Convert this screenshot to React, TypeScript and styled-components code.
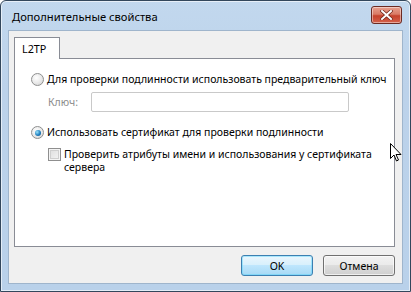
import styled, { createGlobalStyle } from 'styled-components'

const GlobalStyle = createGlobalStyle`
  html, body {
    margin: 0;
    padding: 0;
    background: #ffffff;
  }
  body {
    font-family: 'Noto Sans', 'DejaVu Sans', sans-serif;
  }
`

const Window = styled.div`
  box-sizing: border-box;
  width: 411px;
  height: 292px;
  border: 1px solid #33475c;
  border-radius: 6px 6px 0 0;
  background: linear-gradient(to bottom, #c2d8ee 0%, #bcd2ea 30%, #b9d1ea 100%);
  display: flex;
  flex-direction: column;
  padding: 0 7px 7px 7px;
  box-shadow: inset 0 0 0 1px rgba(255, 255, 255, 0.6);
`

const TitleBar = styled.div`
  height: 29px;
  display: flex;
  align-items: center;
  justify-content: space-between;
`

const Title = styled.span`
  font-size: 11.2px;
  color: #000;
  padding-left: 4px;
  padding-top: 1px;
`

const CloseButton = styled.div`
  box-sizing: border-box;
  width: 31px;
  height: 18px;
  margin-top: -2px;
  margin-right: 1px;
  border: 1px solid #6b2a22;
  border-radius: 3px;
  background: linear-gradient(to bottom, #e7a08f 0%, #d97b66 45%, #c5412b 55%, #d4624c 100%);
  box-shadow: inset 0 0 0 1px rgba(255, 255, 255, 0.45);
  display: flex;
  align-items: center;
  justify-content: center;
`

const Client = styled.div`
  flex: 1;
  background: #f0f0f0;
  border: 1px solid #9fb5cc;
  display: flex;
  flex-direction: column;
  padding: 6px 7px 7px 5px;
`

const TabStrip = styled.div`
  display: flex;
  height: 21px;
  position: relative;
  z-index: 1;
`

const Tab = styled.div`
  box-sizing: border-box;
  width: 46px;
  height: 22px;
  background: #ffffff;
  border: 1px solid #898c95;
  border-bottom: none;
  font-size: 10.8px;
  padding: 3px 0 0 7px;
  color: #000;
`

const TabPanel = styled.div`
  box-sizing: border-box;
  height: 189px;
  background: #ffffff;
  border: 1px solid #898c95;
  padding: 14px 0 0 16px;
  display: flex;
  flex-direction: column;
`

const OptionRow = styled.label<{ $indent?: number; $gap?: number }>`
  display: flex;
  align-items: flex-start;
  gap: 3px;
  margin-left: ${(p) => p.$indent ?? 0}px;
  margin-top: ${(p) => p.$gap ?? 0}px;
  font-size: 10.5px;
  line-height: 13px;
  color: #000;
  white-space: nowrap;
`

const Radio = styled.span<{ $checked?: boolean }>`
  box-sizing: border-box;
  flex: none;
  width: 13px;
  height: 13px;
  border-radius: 50%;
  border: 1px solid #8e8f8f;
  background: radial-gradient(circle at 40% 35%, #ffffff 0%, #eaeaea 50%, #cfcfcf 100%);
  display: flex;
  align-items: center;
  justify-content: center;

  &::after {
    content: '';
    display: ${(p) => (p.$checked ? 'block' : 'none')};
    width: 6px;
    height: 6px;
    border-radius: 50%;
    background: radial-gradient(circle at 35% 35%, #9be3fa 0%, #1f7fc0 55%, #0c4c80 100%);
  }
`

const Checkbox = styled.span`
  box-sizing: border-box;
  flex: none;
  width: 13px;
  height: 13px;
  border: 1px solid #8f8f8f;
  background: linear-gradient(135deg, #dcdcdc 0%, #f6f6f6 100%);
  box-shadow: inset 0 0 0 1px #f4f4f4, inset 0 0 0 2px #cfcfcf;
`

const KeyRow = styled.div`
  display: flex;
  align-items: center;
  margin: 6px 0 0 17px;
  gap: 13px;
`

const KeyLabel = styled.span`
  font-size: 10.5px;
  color: #8d8d8d;
`

const KeyInput = styled.div`
  box-sizing: border-box;
  width: 258px;
  height: 20px;
  border: 1px solid #c9c9c9;
  border-radius: 2px;
  background: #ffffff;
`

const Footer = styled.div`
  display: flex;
  justify-content: flex-end;
  gap: 10px;
  margin-top: 8px;
`

const Button = styled.div<{ $default?: boolean }>`
  box-sizing: border-box;
  width: 72px;
  height: 21px;
  border-radius: 3px;
  border: 1px solid ${(p) => (p.$default ? '#3c7fb1' : '#707070')};
  background: ${(p) =>
    p.$default
      ? 'linear-gradient(to bottom, #eaf6fd 0%, #d9f0fc 45%, #bee6fd 50%, #a7d9f5 100%)'
      : 'linear-gradient(to bottom, #f2f2f2 0%, #ebebeb 45%, #dddddd 50%, #cfcfcf 100%)'};
  box-shadow: inset 0 0 0 1px ${(p) => (p.$default ? '#48d1fb66' : '#ffffffaa')};
  font-size: 10.5px;
  color: #000;
  display: flex;
  align-items: center;
  justify-content: center;
`

const Cursor = styled.svg`
  position: absolute;
  left: 390px;
  top: 143px;
`

const App = () => {
  return (
    <>
      <GlobalStyle />
      <Window>
        <TitleBar>
          <Title>Дополнительные свойства</Title>
          <CloseButton>
            <svg width="13" height="10" viewBox="0 0 13 10">
              <path
                d="M2 1 L11 9 M11 1 L2 9"
                stroke="#6e2519"
                strokeWidth="3.4"
                strokeLinecap="square"
              />
              <path
                d="M2 1 L11 9 M11 1 L2 9"
                stroke="#ffffff"
                strokeWidth="2"
                strokeLinecap="square"
              />
            </svg>
          </CloseButton>
        </TitleBar>
        <Client>
          <TabStrip>
            <Tab>L2TP</Tab>
          </TabStrip>
          <TabPanel>
            <OptionRow>
              <Radio />
              Для проверки подлинности использовать предварительный ключ
            </OptionRow>
            <KeyRow>
              <KeyLabel>Ключ:</KeyLabel>
              <KeyInput />
            </KeyRow>
            <OptionRow $gap={14}>
              <Radio $checked />
              Использовать сертификат для проверки подлинности
            </OptionRow>
            <OptionRow $indent={17} $gap={9}>
              <Checkbox />
              <span>
                Проверить атрибуты имени и использования у сертификата
                <br />
                сервера
              </span>
            </OptionRow>
          </TabPanel>
          <Footer>
            <Button $default>OK</Button>
            <Button>Отмена</Button>
          </Footer>
        </Client>
      </Window>
      <Cursor width="12" height="19" viewBox="0 0 12 19">
        <path
          d="M0.5 0.5 L0.5 15.5 L4 12 L6.5 18 L8.5 17 L6 11.5 L11 11.5 Z"
          fill="#ffffff"
          stroke="#000000"
          strokeWidth="1"
        />
      </Cursor>
    </>
  )
}

export default App
